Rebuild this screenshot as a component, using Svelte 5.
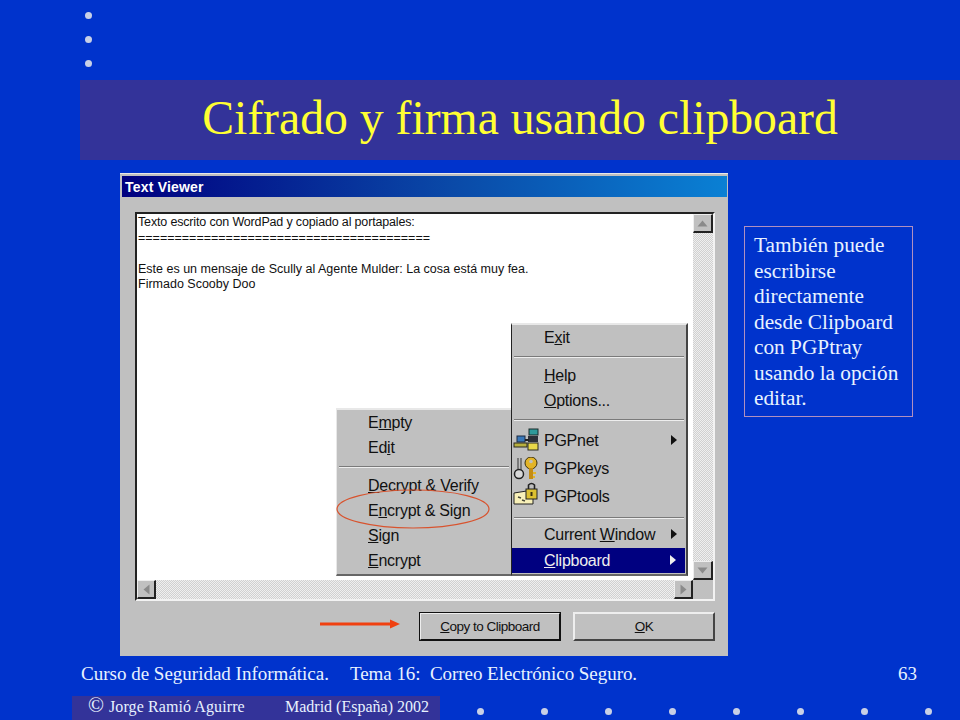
<script>
  const dots = [0, 1, 2];
  const bottomDots = [0, 1, 2, 3, 4, 5, 6, 7];
  const calloutLines = ['También puede', 'escribirse', 'directamente', 'desde Clipboard', 'con PGPtray', 'usando la opción', 'editar.'];
</script>

<div class="slide">
  <div class="dots">
    {#each dots as d}<span class="dot"></span>{/each}
  </div>

  <div class="band"><h1>Cifrado y firma usando clipboard</h1></div>

  <div class="middle">
    <div class="window">
      <div class="titlebar">Text Viewer</div>
      <div class="client">
        <div class="viewer">
          <div class="viewer-top">
            <div class="text">
              <p class="tight">Texto escrito con WordPad y copiado al portapales:</p>
              <p>========================================</p>
              <p>&nbsp;</p>
              <p>Este es un mensaje de Scully al Agente Mulder: La cosa está muy fea.</p>
              <p>Firmado Scooby Doo</p>
            </div>
            <div class="vscroll">
              <span class="sbtn"><svg width="11" height="7" viewBox="0 0 11 7"><path d="M5.5 0.5 L10.5 6.5 H0.5 Z" fill="#8a8a8a"/></svg></span>
              <span class="track"></span>
              <span class="sbtn"><svg width="11" height="7" viewBox="0 0 11 7"><path d="M5.5 6.5 L10.5 0.5 H0.5 Z" fill="#8a8a8a"/></svg></span>
            </div>
          </div>
          <div class="hscroll">
            <span class="sbtn"><svg width="7" height="11" viewBox="0 0 7 11"><path d="M0.5 5.5 L6.5 0.5 V10.5 Z" fill="#8a8a8a"/></svg></span>
            <span class="track"></span>
            <span class="sbtn"><svg width="7" height="11" viewBox="0 0 7 11"><path d="M6.5 5.5 L0.5 0.5 V10.5 Z" fill="#8a8a8a"/></svg></span>
            <span class="corner"></span>
          </div>
        </div>

        <div class="buttons">
          <svg class="arrow" width="80" height="12" viewBox="0 0 80 12"><path d="M0 6 H72" stroke="#f04010" stroke-width="3"/><path d="M70 1.5 L80 6 L70 10.5 Z" fill="#f04010"/></svg>
          <div class="btn default"><span><u>C</u>opy to Clipboard</span></div>
          <div class="btn"><span><u>O</u>K</span></div>
        </div>
      </div>

      <div class="menu submenu">
        <div class="item"><span>E<u>m</u>pty</span></div>
        <div class="item"><span>Ed<u>i</u>t</span></div>
        <div class="sep"></div>
        <div class="item"><span><u>D</u>ecrypt &amp; Verify</span></div>
        <div class="item"><span>E<u>n</u>crypt &amp; Sign</span></div>
        <div class="item"><span><u>S</u>ign</span></div>
        <div class="item"><span><u>E</u>ncrypt</span></div>
      </div>

      <div class="menu traymenu">
        <div class="item"><span>E<u>x</u>it</span></div>
        <div class="sep"></div>
        <div class="item"><span><u>H</u>elp</span></div>
        <div class="item"><span><u>O</u>ptions...</span></div>
        <div class="sep wide"></div>
        <div class="item tall">
          <svg class="icon net" width="26" height="24" viewBox="0 0 26 24">
            <rect x="4" y="8" width="8" height="6" fill="#3a78b8" stroke="#1c2a40"/>
            <rect x="1" y="15" width="13" height="4" fill="#b8b040" stroke="#2a2a20"/>
            <rect x="16" y="1" width="9" height="6" fill="#2f9a9a" stroke="#1a2a2a"/>
            <rect x="15" y="8" width="10" height="6" fill="#2c3038"/>
            <rect x="15" y="15" width="10" height="7" fill="#e8d84a" stroke="#2a2a20"/>
            <path d="M12 12 H16" stroke="#222" stroke-width="2"/>
          </svg>
          <span>PGPnet</span><i class="caret"></i>
        </div>
        <div class="item tall">
          <svg class="icon keys" width="26" height="24" viewBox="0 0 26 24">
            <path d="M5 1 V13 M8 1 V13" stroke="#333"/>
            <circle cx="6" cy="17" r="4.5" fill="#d8d8d8" stroke="#222" stroke-width="1.5"/>
            <circle cx="18" cy="6" r="6" fill="#e2b428" stroke="#3a3010"/>
            <circle cx="18" cy="4.5" r="1.8" fill="#c0c0c0"/>
            <path d="M18 11 V22" stroke="#c48c14" stroke-width="4"/>
            <path d="M20 16 H23 M20 20 H22" stroke="#e2b428" stroke-width="2"/>
          </svg>
          <span>PGPkeys</span>
        </div>
        <div class="item tall">
          <svg class="icon tools" width="26" height="24" viewBox="0 0 26 24">
            <path d="M1 11 L20 8 V22 H1 Z" fill="#f8f0b8" stroke="#222"/>
            <path d="M5 15 L8 16 M9 18 L12 19" stroke="#4a4a3a" stroke-width="1.5"/>
            <rect x="13" y="7" width="11" height="10" fill="#dcc030" stroke="#222"/>
            <path d="M15.5 7 V3 Q18.5 0 21.5 3 V7" fill="none" stroke="#222" stroke-width="1.6"/>
            <rect x="17.5" y="10" width="2" height="4" fill="#3a3010"/>
          </svg>
          <span>PGPtools</span>
        </div>
        <div class="sep short"></div>
        <div class="item tall current"><span>Current <u>W</u>indow</span><i class="caret"></i></div>
        <div class="item selected"><span><u>C</u>lipboard</span><i class="caret"></i></div>
      </div>

      <svg class="ring" width="154" height="40" viewBox="0 0 154 40"><ellipse cx="77" cy="20" rx="76" ry="19" fill="none" stroke="#d8532e" stroke-width="1.2"/></svg>
    </div>

    <div class="callout">
      {#each calloutLines as line}<div>{line}</div>{/each}
    </div>
  </div>

  <div class="course">
    <span class="c1">Curso de Seguridad Informática.</span>
    <span class="c2">Tema 16:&nbsp; Correo Electrónico Seguro.</span>
    <span class="page">63</span>
  </div>

  <div class="bottom">
    <div class="credit">
      <span class="copy">©</span><span class="author">Jorge Ramió Aguirre</span><span class="place">Madrid (España) 2002</span>
    </div>
    <div class="bdots">
      {#each bottomDots as d}<span class="dot"></span>{/each}
    </div>
  </div>
</div>

<style>
  :global(body) {
    margin: 0;
    background: #0033cc;
  }
  .slide {
    width: 960px;
    height: 720px;
    overflow: hidden;
    background: #0033cc;
    font-family: "Liberation Serif", serif;
    display: flex;
    flex-direction: column;
  }
  .dot {
    display: block;
    width: 7px;
    height: 7px;
    border-radius: 50%;
    background: #c8d0e6;
  }
  .dots {
    height: 80px;
    box-sizing: border-box;
    padding: 12px 0 0 85px;
    display: flex;
    flex-direction: column;
    gap: 17px;
  }
  .band {
    margin-left: 80px;
    height: 80px;
    box-sizing: border-box;
    padding-bottom: 4px;
    background: #333399;
    display: flex;
    align-items: center;
    justify-content: center;
  }
  h1 {
    margin: 0;
    font-weight: normal;
    font-size: 47.7px;
    line-height: 1;
    color: #ffff33;
  }
  .middle {
    height: 497px;
    padding: 13px 0 0 120px;
    box-sizing: border-box;
    display: flex;
    align-items: flex-start;
  }
  .window {
    position: relative;
    width: 608px;
    height: 483px;
    box-sizing: border-box;
    padding: 2px 1px 0 2px;
    background: #c0c0c0;
    border-top: 1px solid #e8e8e8;
    display: flex;
    flex-direction: column;
    font-family: "Liberation Sans", sans-serif;
    color: #111;
  }
  .titlebar {
    height: 21px;
    background: linear-gradient(90deg, #000080 0%, #0a4aa8 55%, #0a80d4 100%);
    color: #fff;
    font-size: 14px;
    font-weight: bold;
    letter-spacing: 0.2px;
    line-height: 22px;
    padding-left: 3px;
  }
  .client {
    flex: 1;
    display: flex;
    flex-direction: column;
    padding: 15px 12px 0 13px;
  }
  .viewer {
    height: 389px;
    box-sizing: border-box;
    border-top: 2px solid #222;
    border-left: 2px solid #222;
    border-right: 2px solid #f2f2f2;
    border-bottom: 2px solid #f2f2f2;
    display: flex;
    flex-direction: column;
  }
  .viewer-top {
    flex: 1;
    display: flex;
    min-height: 0;
  }
  .text {
    flex: 1;
    background: #fff;
    padding: 1px 0 0 1px;
    font-size: 12.5px;
    line-height: 15.5px;
  }
  .text p {
    margin: 0;
    white-space: nowrap;
  }
  .text .tight {
    letter-spacing: -0.16px;
  }
  .vscroll {
    width: 20px;
    display: flex;
    flex-direction: column;
    background: #fff;
  }
  .vscroll .sbtn {
    width: 20px;
  }
  .hscroll {
    height: 19px;
    display: flex;
  }
  .track {
    flex: 1;
    background: repeating-conic-gradient(#d0d0d0 0% 25%, #efefef 0% 50%) 0 0 / 2px 2px;
  }
  .sbtn {
    width: 19px;
    height: 19px;
    flex: none;
    box-sizing: border-box;
    background: #c0c0c0;
    border-top: 1px solid #eee;
    border-left: 1px solid #eee;
    border-right: 2px solid #222;
    border-bottom: 2px solid #222;
    display: flex;
    align-items: center;
    justify-content: center;
  }
  .corner {
    width: 20px;
    flex: none;
    background: #c0c0c0;
  }
  .buttons {
    height: 29px;
    margin-top: 11px;
    display: flex;
    align-items: center;
    justify-content: flex-end;
    gap: 12px;
    position: relative;
  }
  .arrow {
    position: absolute;
    left: 185px;
    top: 6px;
  }
  .btn {
    width: 142px;
    height: 29px;
    box-sizing: border-box;
    background: #c0c0c0;
    border-top: 2px solid #eee;
    border-left: 2px solid #eee;
    border-right: 2px solid #444;
    border-bottom: 2px solid #444;
    display: flex;
    align-items: center;
    justify-content: center;
    font-size: 13.5px;
    letter-spacing: -0.5px;
  }
  .btn.default {
    outline: 1px solid #111;
    outline-offset: -1px;
    border-right-color: #111;
    border-bottom-color: #111;
  }
  .menu {
    position: absolute;
    box-sizing: border-box;
    background: #c0c0c0;
    border-top: 2px solid #e8e8e8;
    border-left: 1px solid #e8e8e8;
    border-right: 2px solid #444;
    border-bottom: 2px solid #666;
    font-size: 16px;
    letter-spacing: -0.25px;
  }
  .submenu {
    left: 216px;
    top: 234px;
    width: 177px;
    height: 168px;
    z-index: 1;
  }
  .traymenu {
    left: 391px;
    top: 149px;
    width: 177px;
    height: 253px;
    z-index: 2;
    border-left-color: #222;
  }
  .item {
    height: 25px;
    display: flex;
    align-items: center;
    padding-left: 31px;
    position: relative;
    white-space: nowrap;
  }
  .traymenu .item {
    padding-left: 32px;
  }
  .traymenu .item.tall {
    height: 28px;
  }
  .traymenu .item.current {
    height: 27px;
  }
  .item.selected {
    background: #000080;
    color: #eee;
    margin-right: 1px;
  }
  .sep {
    height: 1px;
    background: #7a7a7a;
    border-bottom: 1px solid #eee;
    margin: 6px 2px 5px;
  }
  .sep.wide {
    margin-bottom: 6px;
  }
  .sep.short {
    margin-bottom: 2px;
  }
  .icon {
    position: absolute;
    left: 1px;
  }
  .icon.net {
    top: 1px;
  }
  .icon.keys {
    top: 2px;
  }
  .icon.tools {
    top: -1px;
  }
  .caret {
    position: absolute;
    right: 9px;
    top: 50%;
    margin-top: -6px;
    border-left: 6px solid currentColor;
    border-top: 5px solid transparent;
    border-bottom: 5px solid transparent;
  }
  .ring {
    position: absolute;
    left: 216px;
    top: 315px;
    z-index: 3;
  }
  .callout {
    margin: 53px 0 0 16px;
    width: 169px;
    height: 191px;
    box-sizing: border-box;
    border: 1px solid #b090c0;
    padding: 6px 0 0 9px;
    color: #e8f2ff;
    font-size: 21.3px;
    line-height: 25.5px;
    white-space: nowrap;
  }
  .course {
    height: 39px;
    display: flex;
    align-items: flex-start;
    padding: 7px 43px 0 81px;
    box-sizing: border-box;
    color: #e8f2ff;
    font-size: 19px;
    line-height: 20px;
    white-space: nowrap;
  }
  .c1 {
    width: 269px;
  }
  .c2 {
    letter-spacing: -0.05px;
  }
  .page {
    margin-left: auto;
  }
  .bottom {
    display: flex;
    align-items: center;
    margin-left: 72px;
    height: 24px;
  }
  .credit {
    width: 368px;
    height: 24px;
    flex: none;
    background: #333399;
    color: #e8f2ff;
    font-size: 16px;
    line-height: 18px;
    box-sizing: border-box;
    padding-left: 16px;
    display: flex;
    align-items: baseline;
    white-space: nowrap;
  }
  .copy {
    width: 21px;
    font-size: 21px;
    line-height: 18px;
  }
  .author {
    width: 176px;
    letter-spacing: 0.1px;
  }
  .bdots {
    display: flex;
    gap: 57px;
    padding: 6px 0 0 37px;
  }
</style>
